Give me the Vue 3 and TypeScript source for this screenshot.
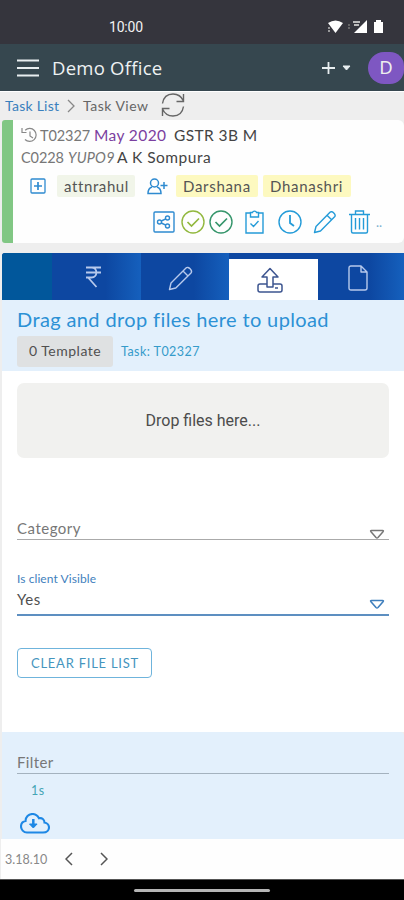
<script setup lang="ts">
import { ref } from 'vue'

interface Tab {
  id: string
  label: string
}

const tabs: Tab[] = [
  { id: 'home', label: 'Home' },
  { id: 'billing', label: 'Billing' },
  { id: 'edit', label: 'Edit' },
  { id: 'upload', label: 'Upload' },
  { id: 'document', label: 'Document' },
]
const activeTab = ref('upload')
const assignees: string[] = ['Darshana', 'Dhanashri']
</script>

<template>
  <div class="screen">
    <div class="status">
      <span class="time">10:00</span>
      <svg class="status-icons" width="58" height="16" viewBox="0 0 58 16">
        <path d="M1 4Q8.500-1 16 4L8.500 14z" fill="#fff" />
        <path d="M2 8v5" stroke="#bbb" stroke-width="1.500" stroke-dasharray="2 1" />
        <path d="M22 5v5" stroke="#777" stroke-width="1.500" stroke-dasharray="2 1" />
        <path d="M26 3h7M27 6h5" stroke="#bbb" stroke-width="2" />
        <path d="M40 1v13H27z" fill="#fff" />
        <path d="M47 3h2V1h5v2h2v11h-9z" fill="#fff" />
      </svg>
    </div>

    <header class="appbar">
      <svg class="menu" width="22" height="18" viewBox="0 0 22 18"><path d="M0 1.500h22M0 9h22M0 16.500h22" stroke="#e8eef0" stroke-width="2" /></svg>
      <span class="brand">Demo Office</span>
      <svg class="plus" width="30" height="14" viewBox="0 0 30 14">
        <path d="M0 7h13M6.500 1v12" stroke="#e8eef0" stroke-width="1.800" />
        <path d="M21 5h7l-3.500 4z" fill="#e8eef0" stroke="#e8eef0" stroke-linejoin="round" />
      </svg>
      <span class="avatar">D</span>
    </header>

    <nav class="crumbs">
      <a class="crumb-link">Task List</a>
      <svg class="crumb-sep" width="8" height="14" viewBox="0 0 8 14"><path d="M1 1l6 6-6 6" fill="none" stroke="#888" stroke-width="1.300" /></svg>
      <span class="crumb-now">Task View</span>
      <svg class="refresh" width="24" height="24" viewBox="0 0 24 24" fill="none" stroke="#666" stroke-width="1.400">
        <path d="M1.500 10.500C2.500 4 7 1 12 1c5 0 8.500 2.500 10.500 7M22.500 1v7.500h-7M22.500 13.500C21.500 20 17 23 12 23c-5 0-8.500-2.500-10.500-7M1.500 23v-7.500h7" />
      </svg>
    </nav>

    <section class="card">
      <div class="line first">
        <svg width="17" height="16" viewBox="0 0 17 16" fill="none" stroke="#888" stroke-width="1.200">
          <path d="M4.200 3.200A6.500 6.500 0 1 1 4 12.500M1 1v4.500h4.500M9 4.500V9l3 2" />
        </svg>
        <span class="task-no">T02327</span>
        <span class="period">May 2020</span>
        <span class="form-name">GSTR 3B M</span>
      </div>
      <div class="line second">
        <span class="client-no">C0228</span>
        <em class="code">YUPO9</em>
        <span class="client">A K Sompura</span>
      </div>
      <div class="people">
        <svg class="add-box" width="16" height="16" viewBox="0 0 16 16" fill="none" stroke="#2e8ad0" stroke-width="1.300"><rect x="1" y="1" width="14" height="14" rx="1" /><path d="M4 8h8M8 4v8" stroke-width="1.700" /></svg>
        <span class="tag green">attnrahul</span>
        <svg class="add-user" width="21" height="17" viewBox="0 0 21 17" fill="none" stroke="#2e8ad0" stroke-width="1.500">
          <circle cx="7.500" cy="5" r="4" /><path d="M5 9C2 10 1 12 1 15.500h13C14 12 13 10 10 9M13.500 7.500h7M17 4v7" />
        </svg>
        <span v-for="name in assignees" :key="name" class="tag yellow" :class="name.toLowerCase()">{{ name }}</span>
      </div>
      <div class="actions">
        <svg class="a1" width="22" height="22" viewBox="0 0 22 22" fill="none" stroke="#2e8ad0" stroke-width="1.400">
          <rect x="1" y="1" width="20" height="20" rx="1" /><circle cx="6.500" cy="11" r="2" /><circle cx="14.500" cy="7" r="2" /><circle cx="14.500" cy="15" r="2" /><path d="M8.300 10l4.500-2.200M8.300 12l4.500 2.200" />
        </svg>
        <svg class="a2" width="24" height="24" viewBox="0 0 24 24" fill="none" stroke="#92b83e" stroke-width="1.400"><circle cx="12" cy="12" r="11" /><path d="M6.500 12l4 4 7.500-7.500" stroke-width="1.700" /></svg>
        <svg class="a3" width="24" height="24" viewBox="0 0 24 24" fill="none" stroke="#35956b" stroke-width="1.400"><circle cx="12" cy="12" r="11" /><path d="M6.500 12l4 4 7.500-7.500" stroke-width="1.700" /></svg>
        <svg class="a4" width="19" height="24" viewBox="0 0 19 24" fill="none" stroke="#249bd8" stroke-width="1.400">
          <path d="M5 3H1v20h17V3h-4M5.500 2.500h2C7.800.6 11.200.6 11.500 2.500h2V7h-8zM5.500 13.500l3 3 5-5.500" />
        </svg>
        <svg class="a5" width="24" height="24" viewBox="0 0 24 24" fill="none" stroke="#249bd8" stroke-width="1.400"><circle cx="12" cy="12" r="11" /><path d="M12 5v8l4 3" stroke-width="1.800" /></svg>
        <svg class="a6" width="24" height="24" viewBox="0 0 24 24" fill="none" stroke="#249bd8" stroke-width="1.400">
          <path d="M1.500 22.500l1.500-6L17 2.200c2-2 6.500 2.600 4.600 4.600L7.500 21zM14 5.200l4.600 4.600" stroke-linejoin="round" />
        </svg>
        <svg class="a7" width="21" height="24" viewBox="0 0 21 24" fill="none" stroke="#249bd8" stroke-width="1.400">
          <path d="M0 4.500h21M6.500 4V1h8v3M2.500 4.500v17q0 1.500 1.500 1.500h13q1.500 0 1.500-1.500v-17M6.500 8v11.500M10.500 8v11.500M14.500 8v11.500" />
        </svg>
        <span class="more">..</span>
      </div>
    </section>

    <div class="tabs">
      <button v-for="tab in tabs" :key="tab.id" type="button" class="tab" :class="[tab.id, { active: tab.id === activeTab }]" :aria-label="tab.label" @click="activeTab = tab.id">
        <svg v-if="tab.id === 'billing'" width="17" height="22" viewBox="0 0 17 22" fill="none" stroke="#b7c9ec" stroke-width="1.800">
          <path d="M1 1.500h15M1 6.500h15M1 11.500h5.500C13 11.500 13 1.500 6.500 1.500M3.500 12l8 9" />
        </svg>
        <svg v-else-if="tab.id === 'edit'" width="26" height="26" viewBox="0 0 26 26" fill="none" stroke="#b7c9ec" stroke-width="1.400" stroke-linejoin="round">
          <path d="M1.500 24.500l1.500-6.500L18 3c2.300-2.300 7 2.700 5 5L7.800 23zM15 6l5 5" />
        </svg>
        <svg v-else-if="tab.id === 'upload'" width="26" height="26" viewBox="0 0 26 26" fill="none" stroke="#3d5590" stroke-width="1.500" stroke-linejoin="round">
          <path d="M10 20V10H5l8-8.500L21 10h-5v10zM10 17H3q-2 0-2 2v4q0 2 2 2h20q2 0 2-2v-4q0-2-2-2h-7M18 21h3" />
        </svg>
        <svg v-else-if="tab.id === 'document'" width="20" height="26" viewBox="0 0 20 26" fill="none" stroke="#b7c9ec" stroke-width="1.400" stroke-linejoin="round">
          <path d="M3 1h10l6 6v16q0 2-2 2H3q-2 0-2-2V3q0-2 2-2zM13 1v6h6" />
        </svg>
      </button>
    </div>

    <section class="upload-head">
      <div class="upload-title">Drag and drop files here to upload</div>
      <div class="upload-meta"><span class="template">0 Template</span><span class="task-ref">Task: T02327</span></div>
    </section>

    <section class="form">
      <div class="dropzone">Drop files here...</div>
      <div class="field category">
        <span class="placeholder">Category</span>
        <svg width="16" height="11" viewBox="0 0 16 11"><path d="M2.500 1.500h11q1.500 0 .5 1.300L9 8.500q-1 1-2 0L2 2.800Q1 1.500 2.500 1.500z" fill="none" stroke="#777" stroke-width="1.500" /></svg>
      </div>
      <div class="field-label">Is client Visible</div>
      <div class="field visible">
        <span class="value">Yes</span>
        <svg width="16" height="11" viewBox="0 0 16 11"><path d="M2.500 1.500h11q1.500 0 .5 1.300L9 8.500q-1 1-2 0L2 2.800Q1 1.500 2.500 1.500z" fill="none" stroke="#3f7fbd" stroke-width="1.600" /></svg>
      </div>
      <button type="button" class="clear">CLEAR FILE LIST</button>
    </section>

    <section class="filter">
      <div class="filter-input">Filter</div>
      <div class="elapsed">1s</div>
      <svg class="cloud" width="30" height="21" viewBox="0 0 30 21" fill="none" stroke="#1e88e5" stroke-width="2.100">
        <path d="M7 19.500h16c4 0 6-2.500 6-5s-2-4.700-4.500-5c0-3-2.500-5-5.500-4.200C17.500 2.500 15 1 12.500 1 8.500 1 5.500 4 5.500 8 2.500 8.500 1 11 1 13.500c0 3 2.500 6 6 6z" />
        <path d="M13.300 6v8" stroke-width="2.500" /><path d="M9.500 11h7.600l-3.800 4z" fill="#1e88e5" stroke-width="1" />
      </svg>
    </section>

    <footer class="footer">
      <span class="version">3.18.10</span>
      <svg class="prev" width="8" height="14" viewBox="0 0 8 14"><path d="M7 1L1 7l6 6" fill="none" stroke="#555" stroke-width="1.500" /></svg>
      <svg class="next" width="8" height="14" viewBox="0 0 8 14"><path d="M1 1l6 6-6 6" fill="none" stroke="#555" stroke-width="1.500" /></svg>
    </footer>
    <div class="gesture"><span class="pill"></span></div>
  </div>
</template>

<style>
body { background: #eee; }
</style>

<style scoped>
.screen { width: 404px; height: 900px; overflow: hidden; display: flex; flex-direction: column; background: #eee; font-family: Lato, "Open Sans", sans-serif; color: #505050; white-space: nowrap; }
.screen > * { flex: none; box-sizing: border-box; }
svg { flex: none; display: block; }
button { font-family: inherit; margin: 0; }
.status { height: 44px; background: #35353d; display: flex; align-items: center; padding: 10px 18px 0 109px; }
.time { flex: 1; font: 400 14px/18px Roboto, sans-serif; color: #f2f2f2; letter-spacing: -0.2px; }
.status-icons { margin-right: 1px; }
.appbar { height: 48px; background: #36474f; border-bottom: 1px solid #fff; display: flex; align-items: center; padding-left: 17px; }
.menu { margin-right: 13px; }
.brand { flex: 1; font-family: "Open Sans", sans-serif; font-size: 18.500px; line-height: 24px; letter-spacing: 0.25px; color: #eef2f3; }
.plus { margin-right: 16px; }
.avatar { width: 36px; height: 32px; border-radius: 16px 14px 14px 16px; background: #7e57c2; color: #eee; display: flex; align-items: center; justify-content: center; font-size: 17px; }
.crumbs { height: 28px; display: flex; align-items: center; padding-left: 5px; font-size: 14px; line-height: 20px; }
.crumb-link { width: 62px; color: #3a80bd; letter-spacing: 0.25px; }
.crumb-sep { margin-right: 8px; }
.crumb-now { width: 79px; color: #666; letter-spacing: 0.5px; }
.refresh { margin: 0 0 2px -1px; }
.card { height: 123px; margin-left: 2px; background: #fefefe; border-left: 11px solid #81c784; border-radius: 3px 6px 6px 3px; padding: 4px 0 0 8px; }
.line { display: flex; align-items: center; height: 22px; font-size: 15.500px; letter-spacing: 0.4px; color: #444; }
.task-no { width: 54px; margin-left: 2px; font-size: 14.500px; letter-spacing: -0.1px; color: #777; }
.period { width: 80px; color: #7b3fa0; }
.client { letter-spacing: 0.5px; }
.client-no { width: 47px; font-size: 14.500px; letter-spacing: -0.1px; color: #777; }
.code { width: 49px; font-size: 14.500px; letter-spacing: 0.2px; color: #777; }
.people { display: flex; align-items: center; height: 22px; margin-top: 7px; padding-left: 9px; }
.tag { height: 22px; box-sizing: border-box; display: flex; align-items: center; padding-left: 7px; border-radius: 2px; font-size: 15px; letter-spacing: 0.7px; color: #555; }
.green { width: 78px; margin: 0 12px 0 11px; background: #f1f5e9; letter-spacing: 0.6px; }
.yellow { margin-left: 5px; padding-bottom: 1px; background: #fdf9c0; }
.darshana { width: 82px; margin-left: 8px; }
.dhanashri { width: 88px; }
.actions { display: flex; align-items: center; margin-top: 13px; padding-left: 132px; height: 24px; }
.a1 { margin-right: 6px; }
.a2 { margin-right: 4px; }
.a3 { margin-right: 12px; }
.a4 { margin-right: 14px; }
.a5 { margin-right: 11px; }
.a6 { margin-right: 12px; }
.a7 { margin-right: 6px; }
.more { color: #7bb0cf; font-size: 13px; }
.tabs { height: 47px; margin: 10px 0 0 2px; display: flex; background: #0d47a1; border-radius: 3px 0 0 0; overflow: hidden; }
.tab { border: 0; padding: 2px 0 0; display: flex; align-items: center; justify-content: center; background: linear-gradient(90deg, #0d47a1 60%, #1560bd); }
.home { width: 50px; background: #01579b; }
.billing { width: 89px; padding: 0 6px 0 0; }
.edit { width: 88px; padding-right: 8px; }
.upload { width: 89px; padding-right: 7px; }
.document { width: 86px; padding-right: 7px; }
.active { background: #fff; margin-top: 6px; padding-top: 0; }
.upload-head { height: 71px; margin-left: 2px; background: #e3f0fc; padding: 7px 0 0 15px; }
.upload-title { font-size: 20px; line-height: 24px; letter-spacing: 0.38px; color: #2c91d5; }
.upload-meta { display: flex; align-items: center; margin-top: 5px; }
.template { width: 96px; height: 31px; box-sizing: border-box; padding-left: 12px; line-height: 30px; background: #dfe1e2; border-radius: 3px; font-size: 14px; letter-spacing: 0.5px; }
.task-ref { margin-left: 8px; font-size: 12.500px; letter-spacing: 0.45px; color: #359bca; }
.form { height: 361px; margin-left: 2px; background: #fff; padding: 12px 15px 0; }
.dropzone { height: 75px; border-radius: 7px; background: #f1f1ef; display: flex; align-items: center; justify-content: center; font: 16px Roboto, sans-serif; color: #4c4c4c; }
.field { display: flex; justify-content: space-between; box-sizing: border-box; font-size: 15px; line-height: 20px; letter-spacing: 0.5px; }
.category { height: 22px; margin-top: 60px; border-bottom: 1.500px solid #aaa; color: #777; }
.category svg { margin: 11px 4px 0; }
.field-label { margin-top: 31px; font-size: 12px; line-height: 16px; letter-spacing: 0.08px; color: #3f7fbd; }
.visible { height: 27px; margin-top: 2px; border-bottom: 2px solid #5d8fc1; }
.visible svg { margin: 10px 4px 0; }
.clear { display: block; width: 135px; height: 30px; margin-top: 32px; padding: 0 0 1px 13px; border: 1px solid #6fb4dc; border-radius: 4px; background: #fff; color: #4595be; font-size: 13px; letter-spacing: 0.75px; text-align: left; }
.filter { height: 107px; margin-left: 2px; background: #e3f0fc; padding: 20px 15px 0; border-radius: 0 4px 0 0; }
.filter-input { height: 22px; box-sizing: border-box; border-bottom: 1.500px solid #a4b2be; font-size: 15px; line-height: 20px; letter-spacing: 0.4px; color: #777; }
.elapsed { margin: 9px 0 0 14px; font-size: 12.500px; line-height: 16px; letter-spacing: 0.4px; color: #43a5b5; }
.cloud { margin: 14px 0 0 3px; }
.footer { height: 40px; margin-left: 1px; background: #fefefe; display: flex; align-items: center; padding-left: 4px; }
.version { width: 60px; font-size: 12.500px; color: #888; }
.prev { margin-right: 27px; }
.gesture { flex: 1; background: #000; border-top: 1px solid #555; display: flex; justify-content: center; padding-top: 9px; }
.pill { width: 136px; height: 3px; background: #b5b5b5; border-radius: 2px; }
</style>
